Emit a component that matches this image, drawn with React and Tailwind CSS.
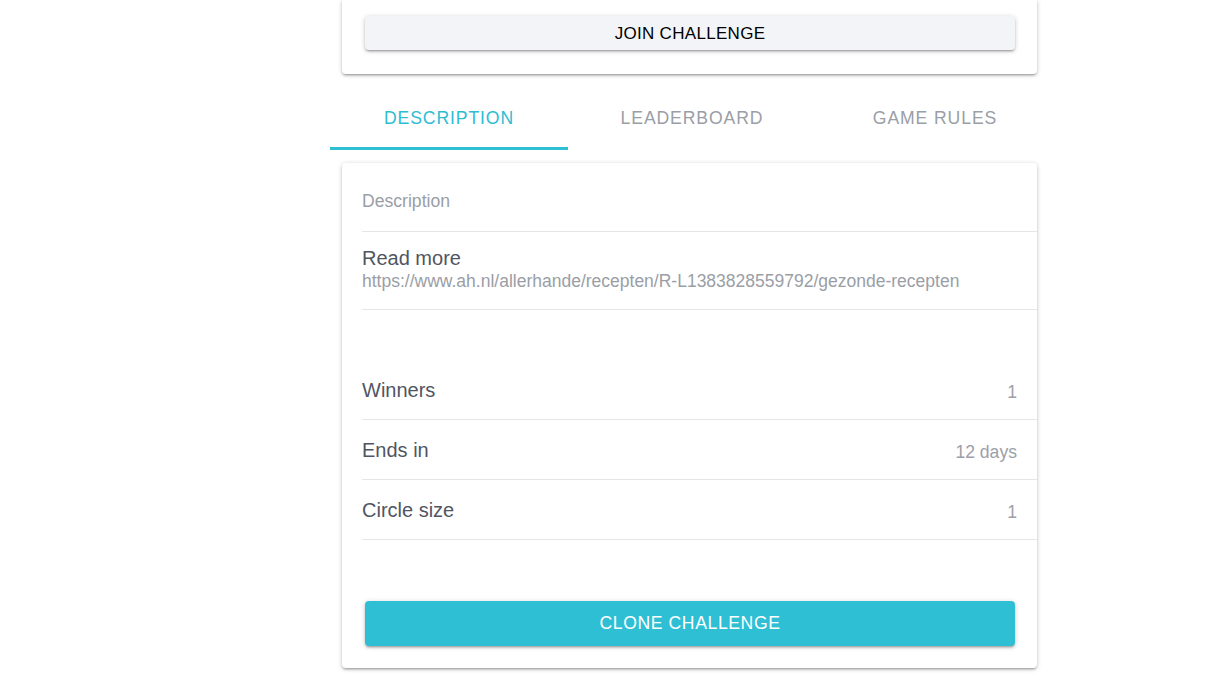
import React from "react";

const cardShadow =
  "shadow-[0_2px_2px_0_rgba(0,0,0,0.14),0_3px_1px_-2px_rgba(0,0,0,0.12),0_1px_5px_0_rgba(0,0,0,0.2)]";

function InfoRow({ label, value }) {
  return (
    <div className="flex h-[60px] items-center justify-between border-b border-[#e6e6e6] pr-[20px]">
      <span className="text-[20px] text-[#505562]">{label}</span>
      <span className="mt-[6px] text-[17.6px] text-[#9ca0a8]">{value}</span>
    </div>
  );
}

function Tab({ label, active }) {
  return (
    <div className="flex h-[62px] w-[238px] flex-col">
      <div
        className={
          active
            ? "flex flex-1 items-center justify-center pt-[1px] text-[17.6px] tracking-[0.9px] text-[#2dbdd3]"
            : "flex flex-1 items-center justify-center pt-[1px] text-[17.6px] tracking-[0.9px] text-[#9a9ea6]"
        }
      >
        {label}
      </div>
      <div className={active ? "h-[3px] w-full bg-[#2ebfd5]" : "h-[3px] w-full bg-transparent"} />
    </div>
  );
}

export default function App() {
  return (
    <div
      className="min-h-[691px] w-full bg-white"
      style={{ fontFamily: '"Liberation Sans", Arial, sans-serif' }}
    >
      <div className="ml-[330px] w-[726px]">
        {/* Top card */}
        <div className={`ml-[12px] w-[695px] rounded-b-[4px] bg-white ${cardShadow}`}>
          <div className="px-[22px] pb-[24px] pl-[23px] pt-[16px]">
            <button className="flex h-[34px] w-full items-center justify-center rounded-[4px] bg-[#f3f4f7] pt-[2px] text-[17px] tracking-[0.3px] text-black shadow-[0_2px_2px_0_rgba(0,0,0,0.14),0_3px_1px_-2px_rgba(0,0,0,0.12),0_1px_5px_0_rgba(0,0,0,0.2)]">
              JOIN CHALLENGE
            </button>
          </div>
        </div>

        {/* Tabs */}
        <div className="mt-[14px] flex gap-[5px]">
          <Tab label="DESCRIPTION" active />
          <Tab label="LEADERBOARD" />
          <Tab label="GAME RULES" />
        </div>

        {/* Description card */}
        <div className={`ml-[12px] mt-[13px] w-[695px] rounded-[4px] bg-white ${cardShadow}`}>
          <div className="pl-[20px]">
            <div className="flex h-[69px] items-center border-b border-[#e6e6e6] pt-[8px] text-[17.6px] text-[#9a9ea6]">
              Description
            </div>
            <div className="flex h-[78px] flex-col justify-center border-b border-[#e6e6e6] pb-[4px]">
              <span className="text-[20px] leading-[24px] text-[#505562]">Read more</span>
              <span className="text-[17.5px] leading-[22px] text-[#9a9ea6]">
                https://www.ah.nl/allerhande/recepten/R-L1383828559792/gezonde-recepten
              </span>
            </div>
            <div className="h-[50px]" />
            <InfoRow label="Winners" value="1" />
            <InfoRow label="Ends in" value="12 days" />
            <InfoRow label="Circle size" value="1" />
          </div>
          <div className="px-[22px] pb-[22px] pl-[23px] pt-[61px]">
            <button className="flex h-[45px] w-full items-center justify-center rounded-[4px] bg-[#2ebfd5] text-[17.6px] tracking-[0.6px] text-white shadow-[0_2px_2px_0_rgba(0,0,0,0.14),0_3px_1px_-2px_rgba(0,0,0,0.12),0_1px_5px_0_rgba(0,0,0,0.2)]">
              CLONE CHALLENGE
            </button>
          </div>
        </div>
      </div>
    </div>
  );
}
